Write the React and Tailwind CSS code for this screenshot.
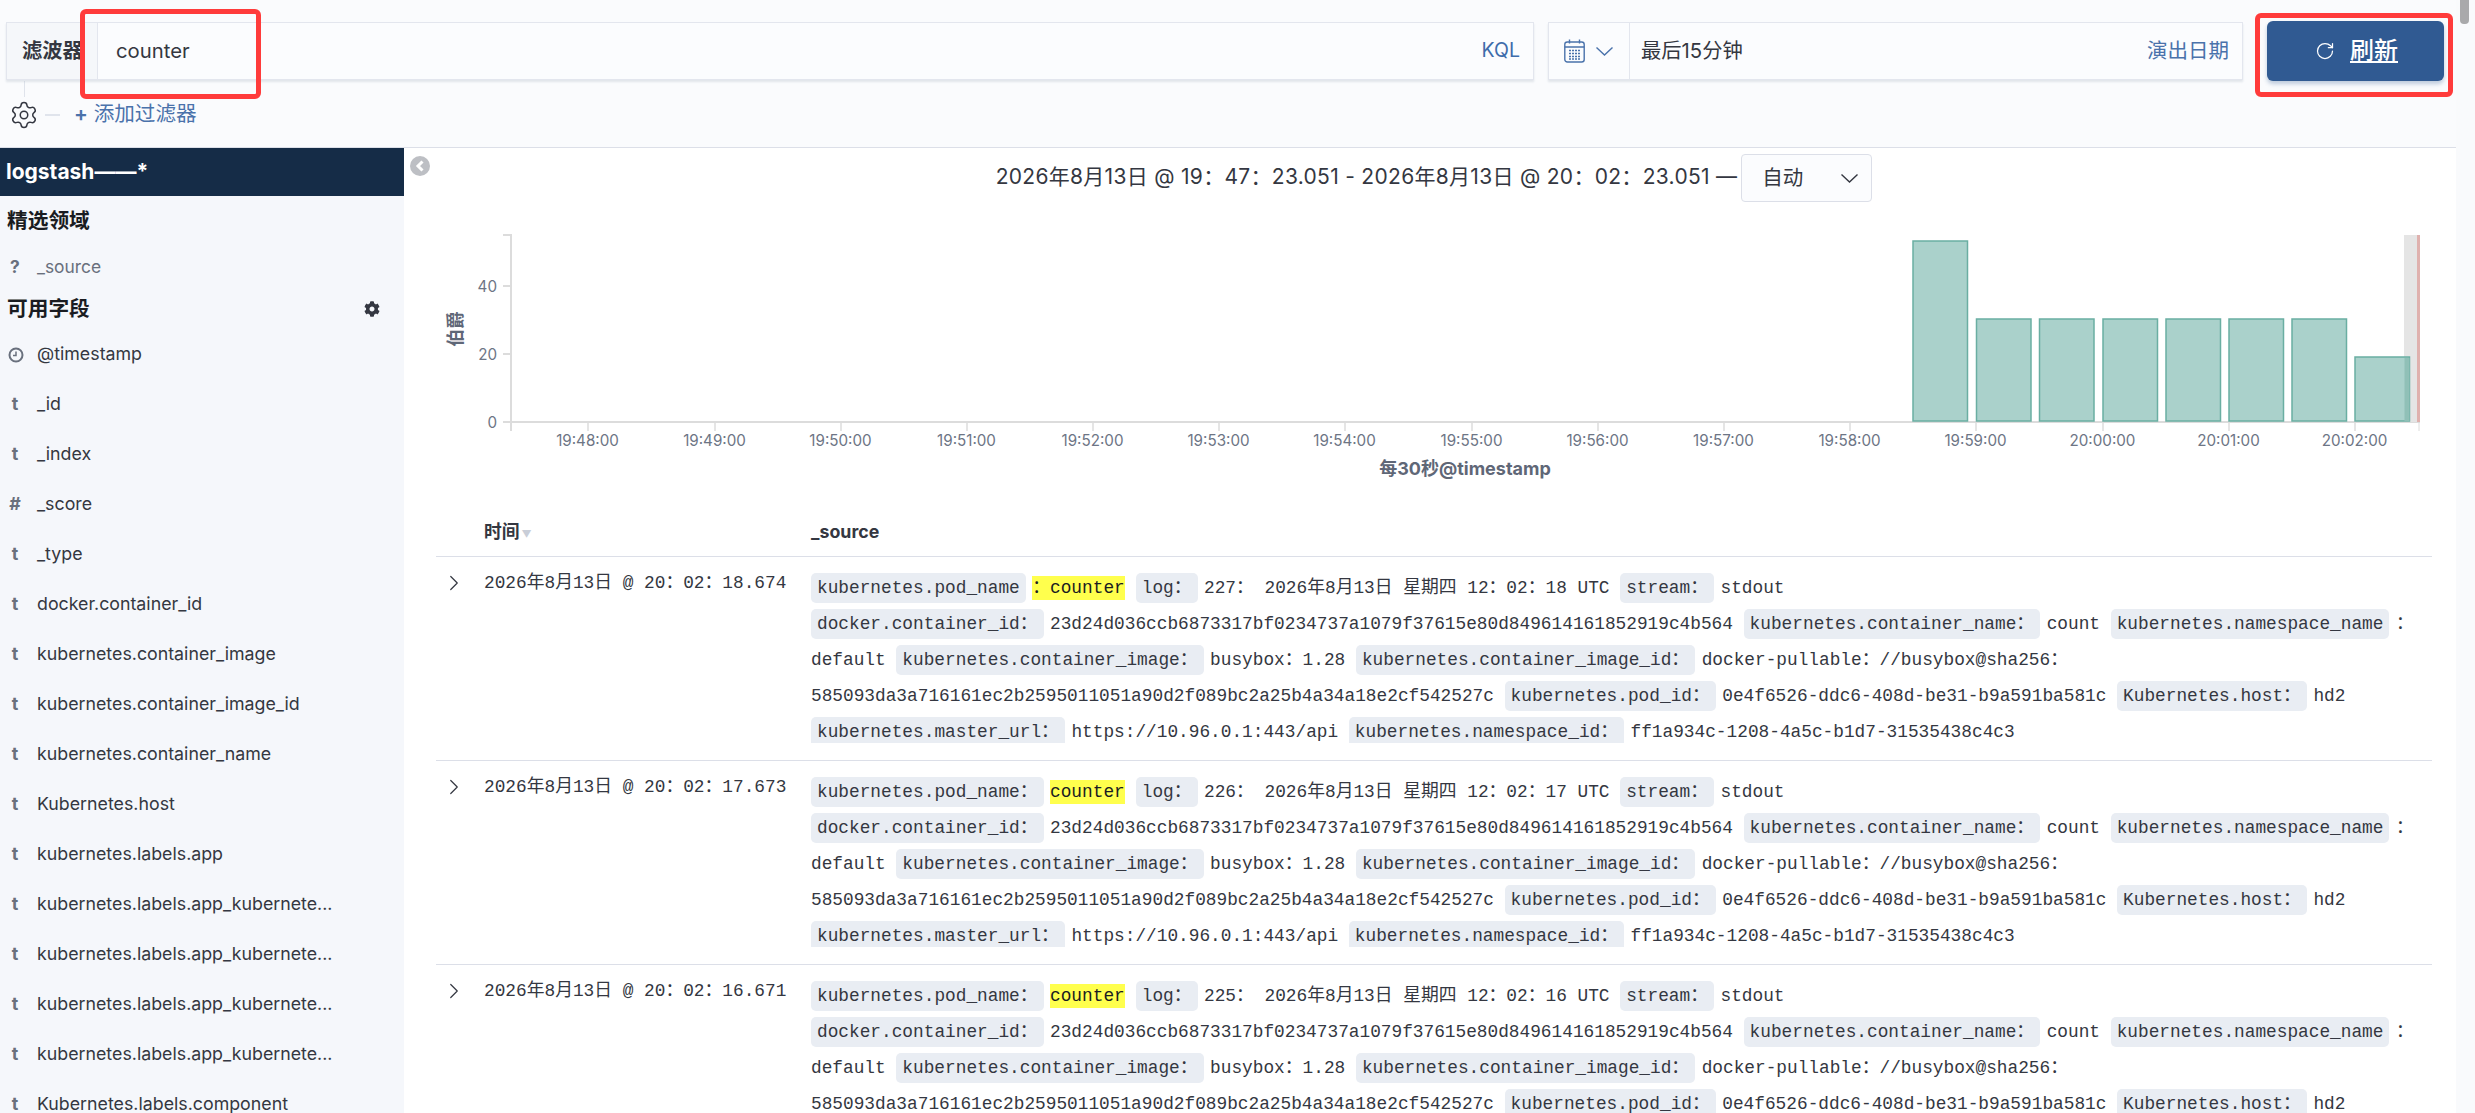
import { FaCog } from "react-icons/fa";
import { ChevronRight, RotateCw, Settings } from "lucide-react";

const MONO = "font-['Liberation_Mono','Noto_Sans_CJK_SC',monospace] text-[17.8px]";

const FIELDS = [
  ["t", "_id"],
  ["t", "_index"],
  ["#", "_score"],
  ["t", "_type"],
  ["t", "docker.container_id"],
  ["t", "kubernetes.container_image"],
  ["t", "kubernetes.container_image_id"],
  ["t", "kubernetes.container_name"],
  ["t", "Kubernetes.host"],
  ["t", "kubernetes.labels.app"],
  ["t", "kubernetes.labels.app_kubernete..."],
  ["t", "kubernetes.labels.app_kubernete..."],
  ["t", "kubernetes.labels.app_kubernete..."],
  ["t", "kubernetes.labels.app_kubernete..."],
  ["t", "Kubernetes.labels.component"],
];

const ROWS = [
  { time: "18.674", log: "227", sec: "18", first: true },
  { time: "17.673", log: "226", sec: "17" },
  { time: "16.671", log: "225", sec: "16" },
];

const TICKS = [
  ["19:48:00", 588], ["19:49:00", 715], ["19:50:00", 841], ["19:51:00", 967],
  ["19:52:00", 1093], ["19:53:00", 1219], ["19:54:00", 1345], ["19:55:00", 1472],
  ["19:56:00", 1598], ["19:57:00", 1724], ["19:58:00", 1850], ["19:59:00", 1976],
  ["20:00:00", 2103], ["20:01:00", 2229], ["20:02:00", 2355],
];

const BARS = [
  [1913, 241], [1976.5, 319], [2039.5, 319], [2103, 319],
  [2166, 319], [2229, 319], [2292, 319], [2355, 357],
];

function Pill({ children }) {
  return <span className="mr-[6.5px] flex h-[30px] items-center rounded-[5px] bg-[#e9edf3] px-[6px]">{children}</span>;
}

function Val({ children }) {
  return <span className="mr-[10.67px] whitespace-pre">{children}</span>;
}

function Mark({ children }) {
  return <span className="mr-[11px] flex h-[24px] items-center bg-[#ffff4d] text-[#1a1c21]">{children}</span>;
}

function Line({ children }) {
  return <div className="mb-[6px] flex h-[30px] shrink-0 items-center whitespace-pre">{children}</div>;
}

function Chevron() {
  return (
    <svg width="17" height="9" viewBox="0 0 17 9" fill="none" stroke="currentColor" strokeWidth="1.4">
      <path d="M0.5 0.5L8.5 8L16.5 0.5" />
    </svg>
  );
}

function CalendarIcon() {
  return (
    <svg width="21" height="24" viewBox="0 0 21 24" fill="none" stroke="currentColor" strokeWidth="1.4">
      <rect x="0.8" y="3" width="19.4" height="20" rx="2.5" />
      <path d="M0.8 8H20.2M5.5 0.5V4.5M15.5 0.5V4.5" />
      <path d="M5 11.5H16M5 14.5H16M5 17.5H16M5 20H16" strokeWidth="1.5" strokeDasharray="2 1" />
    </svg>
  );
}

function LogRow({ row }) {
  return (
    <div className="flex h-[204px] border-b border-[#dcdfe8] pt-[16px] text-[#343741]">
      <div className="flex h-[20px] w-[48px] items-center justify-center text-[#343741]">
        <ChevronRight size={26} strokeWidth={1.1} className="ml-[-12px]" />
      </div>
      <div className={`${MONO} w-[327px] whitespace-pre leading-[20px]`}>2026年8月13日 @ 20：02：{row.time}</div>
      <div className={`${MONO} h-[170px] flex-1 overflow-hidden`}>
        <Line>
          {row.first ? (
            <>
              <Pill>kubernetes.pod_name</Pill>
              <Mark>：counter</Mark>
            </>
          ) : (
            <>
              <Pill>kubernetes.pod_name：</Pill>
              <Mark>counter</Mark>
            </>
          )}
          <Pill>log：</Pill>
          <Val>{row.log}： 2026年8月13日 星期四 12：02：{row.sec} UTC</Val>
          <Pill>stream：</Pill>
          <Val>stdout</Val>
        </Line>
        <Line>
          <Pill>docker.container_id：</Pill>
          <Val>23d24d036ccb6873317bf0234737a1079f37615e80d849614161852919c4b564</Val>
          <Pill>kubernetes.container_name：</Pill>
          <Val>count</Val>
          <Pill>kubernetes.namespace_name</Pill>
          <Val>：</Val>
        </Line>
        <Line>
          <Val>default</Val>
          <Pill>kubernetes.container_image：</Pill>
          <Val>busybox：1.28</Val>
          <Pill>kubernetes.container_image_id：</Pill>
          <Val>docker-pullable：//busybox@sha256：</Val>
        </Line>
        <Line>
          <Val>585093da3a716161ec2b2595011051a90d2f089bc2a25b4a34a18e2cf542527c</Val>
          <Pill>kubernetes.pod_id：</Pill>
          <Val>0e4f6526-ddc6-408d-be31-b9a591ba581c</Val>
          <Pill>Kubernetes.host：</Pill>
          <Val>hd2</Val>
        </Line>
        <Line>
          <Pill>kubernetes.master_url：</Pill>
          <Val>https://10.96.0.1:443/api</Val>
          <Pill>kubernetes.namespace_id：</Pill>
          <Val>ff1a934c-1208-4a5c-b1d7-31535438c4c3</Val>
        </Line>
      </div>
    </div>
  );
}

function Chart() {
  return (
    <svg width="2052" height="290" viewBox="404 220 2052 290" className="block shrink-0">
      <g stroke="#dcdcdc" strokeWidth="2" fill="none">
        <path d="M511 234V431M503 235H511M503 286H511M503 354H511M503 422H511M511 422H2420" />
      </g>
      <rect x="2404" y="235" width="13" height="187" fill="#e5e5e5" />
      <rect x="2417" y="235" width="3" height="187" fill="#dfb1ae" />
      {TICKS.map(([label, x]) => (
        <g key={label}>
          <path d={`M${x} 422V431`} stroke="#dcdcdc" strokeWidth="1.5" />
          <text x={x - 0.5} y="446" textAnchor="middle" fontFamily="Inter" fontSize="15.2" fill="#6d7585">{label}</text>
        </g>
      ))}
      <path d="M2419 422V431" stroke="#dcdcdc" strokeWidth="1" />
      {BARS.map(([x, top]) => (
        <rect key={x} x={x} y={top} width="54.5" height={421 - top} fill="#aad1cb" stroke="#6aaea2" strokeWidth="1.5" />
      ))}
      <rect x="2404.5" y="358" width="5" height="63" fill="#90c0b7" />
      {[["40", 291.5], ["20", 359.5], ["0", 427.5]].map(([label, y]) => (
        <text key={label} x="497" y={y} textAnchor="end" fontFamily="Inter" fontSize="15.2" fill="#6d7585">{label}</text>
      ))}
      <text x="456" y="329" transform="rotate(-90 456 329)" dy="6" textAnchor="middle" fontFamily="Noto Sans CJK SC" fontWeight="700" fontSize="17.8" fill="#5f6777">伯爵</text>
      <text x="1465" y="475" textAnchor="middle" fontFamily="Inter, Noto Sans CJK SC" fontWeight="700" fontSize="18" fill="#5f6777">每30秒@timestamp</text>
    </svg>
  );
}

export default function App() {
  return (
    <div className="relative flex h-[1113px] w-full overflow-hidden bg-white font-['Inter','Noto_Sans_CJK_SC',sans-serif] text-[#343741]">
      <div className="flex min-w-0 flex-1 flex-col">
        {/* top bar */}
        <div className="relative h-[148px] shrink-0 border-b border-[#dcdfe8] bg-[#fafbfd] pt-[22px]">
          <div className="flex items-start pl-[6px]">
            <div className="flex h-[58px] w-[1528px] border border-[#e3e6ee] bg-[#fbfcfe] shadow-[0_2px_2px_rgba(152,162,179,0.25)]">
              <div className="flex w-[91px] items-center border-r border-[#e3e6ee] bg-[#f5f7fa] pl-[15px] text-[20.3px] font-semibold">滤波器</div>
              <div className="flex flex-1 items-center pl-[18px] text-[20.3px]">counter</div>
              <div className="flex items-center pr-[13px] text-[19.5px] text-[#3e6cab]">KQL</div>
            </div>
            <div className="ml-[14px] flex h-[58px] w-[695px] border border-[#e3e6ee] bg-[#fbfcfe] shadow-[0_2px_2px_rgba(152,162,179,0.25)]">
              <div className="flex w-[81px] items-center gap-[11px] border-r border-[#e3e6ee] pl-[15px] text-[#4a72ab]">
                <CalendarIcon />
                <Chevron />
              </div>
              <div className="flex flex-1 items-center pl-[11px] text-[20.3px]">最后15分钟</div>
              <div className="flex items-center pr-[13px] text-[20.5px] text-[#4a72ab]">演出日期</div>
            </div>
            <button className="ml-[24px] mt-[-1px] flex h-[60px] w-[177px] items-center justify-center gap-[15px] rounded-[6px] bg-[#305a92] pl-[2px] text-white shadow-[0_3px_4px_rgba(48,90,146,0.3)]">
              <RotateCw size={20} strokeWidth={1.5} />
              <span className="text-[24px] font-medium underline underline-offset-2">刷新</span>
            </button>
          </div>
          <div className="ml-[24px] h-[16px] w-px bg-[#dfe3eb]" />
          <div className="flex h-[35px] items-center pl-[9px]">
            <Settings size={30} strokeWidth={1.2} />
            <div className="ml-[6px] h-[2px] w-[15px] bg-[#e0e4ec]" />
            <span className="ml-[14px] text-[20.6px] text-[#4a72ab]">
              <span className="font-semibold">+</span> 添加过滤器
            </span>
          </div>
          {/* red annotation boxes */}
          <div className="absolute left-[80px] top-[9px] h-[90px] w-[181px] rounded-[6px] border-[5px] border-[#ff3b3b]" />
          <div className="absolute left-[2255px] top-[13px] h-[84px] w-[198px] rounded-[6px] border-[5px] border-[#ff3b3b]" />
        </div>

        <div className="flex min-h-0 flex-1">
          {/* sidebar */}
          <div className="w-[404px] shrink-0 overflow-hidden bg-[#f5f7fb]">
            <div className="flex h-[48px] items-center bg-[#152c47] pl-[6px] text-[21px] font-bold text-white">logstash——*</div>
            <div className="flex h-[50px] items-center pl-[7px] text-[20.7px] font-bold text-[#1a1c21]">精选领域</div>
            <div className="flex h-[42px] items-center text-[17.4px] text-[#69707d]">
              <span className="w-[37px] pl-[10px] font-bold">?</span>_source
            </div>
            <div className="flex h-[42px] items-center justify-between pl-[7px] pr-[24px] text-[20.7px] font-bold text-[#1a1c21]">
              可用字段
              <FaCog size={16} className="text-[#343741]" />
            </div>
            <div className="flex h-[49.5px] items-center text-[17.8px]">
              <span className="flex w-[37px] pl-[8px] text-[#69707d]">
                <svg width="16" height="16" viewBox="0 0 16 16" fill="none" stroke="currentColor" strokeWidth="2">
                  <circle cx="8" cy="8" r="6.5" />
                  <path d="M8 4.5V8.5H5" strokeWidth="1.5" />
                </svg>
              </span>
              @timestamp
            </div>
            {FIELDS.map(([type, name], i) => (
              <div key={i} className="flex h-[50px] items-center text-[17.8px]">
                <span className="w-[37px] pr-[7px] text-center font-bold text-[#69707d]">{type}</span>
                {name}
              </div>
            ))}
          </div>

          {/* main */}
          <div className="relative min-w-0 flex-1">
            <div className="absolute left-[6px] top-[8px] flex h-[20px] w-[20px] items-center justify-center rounded-full bg-[#bdbfc4] text-white">
              <svg width="10" height="12" viewBox="0 0 10 12" fill="none" stroke="currentColor" strokeWidth="3">
                <path d="M7.5 1.5L3 6L7.5 10.5" />
              </svg>
            </div>
            <div className="flex h-[54px] items-end justify-center pl-[8px] text-[21px]">
              <span className="mb-[10px] whitespace-pre tracking-[0.3px] text-[#343741]">2026年8月13日 @ 19：47：23.051 - 2026年8月13日 @ 20：02：23.051 —</span>
              <div className="ml-[4px] flex h-[48px] w-[131px] items-center justify-between rounded-[4px] border border-[#dcdfe8] bg-[#fbfcfe] pl-[20px] pr-[13px] text-[20.5px]">
                自动
                <Chevron />
              </div>
            </div>
            <div className="mt-[18px]">
              <Chart />
            </div>
            <div className="ml-[32px] mr-[24px]">
              <div className="flex h-[47px] items-center border-b border-[#dcdfe8] pb-[1px] text-[17.8px] font-bold text-[#343741]">
                <span className="ml-[48px] w-[327px]">
                  时间<span className="ml-[2px] text-[10px] font-normal text-[#c9ced8]">▼</span>
                </span>
                <span>_source</span>
              </div>
              {ROWS.map((r) => (
                <LogRow key={r.time} row={r} />
              ))}
            </div>
          </div>
        </div>
      </div>

      {/* page scrollbar */}
      <div className="w-[19px] shrink-0 bg-[#f9fafc] pl-[4px]">
        <div className="h-[24px] w-[9px] rounded-b-[4px] bg-[#a9a9ab]" />
      </div>
    </div>
  );
}
